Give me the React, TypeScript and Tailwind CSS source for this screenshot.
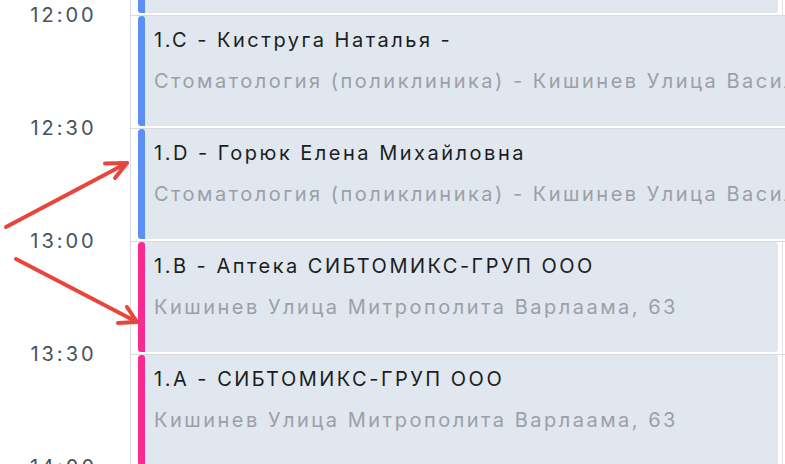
import React from "react";

type Slot = {
  time: string;
  event?: { title: string; subtitle: string; color: "blue" | "pink" };
};

const slots: Slot[] = [
  { time: "11:30", event: { title: "", subtitle: "", color: "blue" } },
  {
    time: "12:00",
    event: {
      title: "1.C - Киструга Наталья -",
      subtitle: "Стоматология (поликлиника) - Кишинев Улица Василия Лупу, 18",
      color: "blue",
    },
  },
  {
    time: "12:30",
    event: {
      title: "1.D - Горюк Елена Михайловна",
      subtitle: "Стоматология (поликлиника) - Кишинев Улица Василия Лупу, 18",
      color: "blue",
    },
  },
  {
    time: "13:00",
    event: {
      title: "1.B - Аптека СИБТОМИКС-ГРУП ООО",
      subtitle: "Кишинев Улица Митрополита Варлаама, 63",
      color: "pink",
    },
  },
  {
    time: "13:30",
    event: {
      title: "1.A - СИБТОМИКС-ГРУП ООО",
      subtitle: "Кишинев Улица Митрополита Варлаама, 63",
      color: "pink",
    },
  },
  { time: "14:00" },
];

const Arrows = () => (
  <svg
    className="absolute left-0 top-0 pointer-events-none"
    width="785"
    height="464"
    viewBox="0 0 785 464"
    fill="none"
    stroke="#e8453c"
    strokeWidth="4"
    strokeLinecap="round"
    strokeLinejoin="round"
  >
    <path d="M6 227 L127 163" />
    <path d="M105 163.5 L127 163 L115 178" />
    <path d="M16 259 L137 322" />
    <path d="M118 323 L137 322 L127 307" />
  </svg>
);

export default function App() {
  return (
    <div
      className="relative w-[785px] h-[464px] overflow-hidden bg-white"
      style={{ fontFamily: "Inter, 'Noto Sans', sans-serif" }}
    >
      <div className="flex flex-col mt-[-98px]">
        {slots.map((slot, i) => (
          <div key={slot.time} className="flex h-[113px]">
            {/* time label sits centred on the hour line */}
            <div className="w-[130px] shrink-0 pr-[3px]">
              {i > 0 && (
                <span className="block -translate-y-1/2 text-center text-[20px] leading-[24px] tracking-[0.15em] text-[#44525f]">
                  {slot.time}
                </span>
              )}
            </div>
            <div className="flex flex-1 border-l border-t border-[#d8dce2]">
              <div className="flex-1 ml-[7px] mr-[4px] h-[110px]">
                {slot.event && (
                  <div className="flex h-full bg-[#e1e7ef] rounded-[3px] overflow-hidden">
                    <div
                      className={`w-[7px] shrink-0 rounded-t-[3px] ${
                        slot.event.color === "blue" ? "bg-[#5c8ff4]" : "bg-[#f92b92]"
                      }`}
                    />
                    {slot.event.title && (
                      <div className="flex-1 min-w-0 pl-[9px] pr-[6px] pt-[11px] overflow-hidden whitespace-nowrap text-[20px] leading-[26px] tracking-[0.125em]">
                        <div className="text-[#1b1e22]">{slot.event.title}</div>
                        <div className="mt-[15px] text-[#9ba0a6] overflow-hidden">
                          {slot.event.subtitle}
                        </div>
                      </div>
                    )}
                  </div>
                )}
              </div>
              <div className="w-px bg-[#e6e2e4]" />
              <div className="w-[2px]" />
            </div>
          </div>
        ))}
      </div>
      <Arrows />
    </div>
  );
}
